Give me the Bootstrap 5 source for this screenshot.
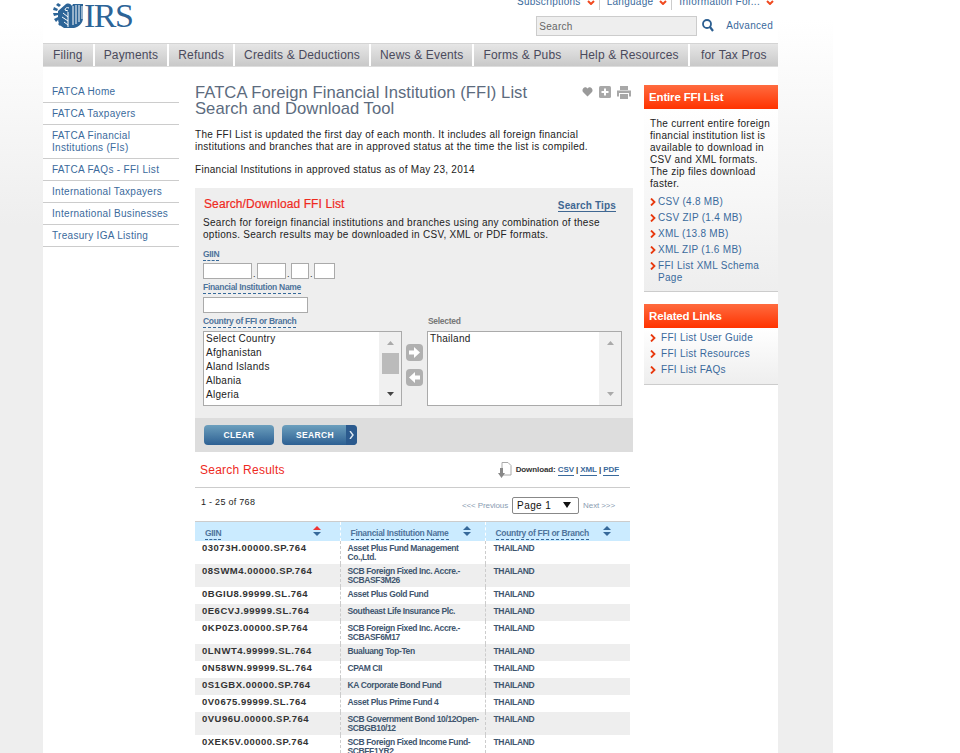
<!DOCTYPE html>
<html lang="en"><head><meta charset="utf-8"><title>FATCA FFI List</title>
<link href="https://cdn.jsdelivr.net/npm/bootstrap@5.3.0/dist/css/bootstrap.min.css" rel="stylesheet">
<style>
html,body{height:753px;overflow:hidden;background:#fff}
body{font-family:"Liberation Sans",Arial,sans-serif;font-size:10px;line-height:12px;letter-spacing:.28px;color:#222}
a{color:#3a6a9c;text-decoration:none}
.pagebg{width:833px;height:753px;padding-left:43px;background:linear-gradient(#fff 0,#fff 20px,#eee 225px)}
.sheet{width:735px;height:753px;background:#fff;overflow:hidden}
.tophead{height:43px}
.logoarea{padding:3px 0 0 10px;gap:1px;height:30px}
.irsword{font-family:"Liberation Serif",serif;font-size:34px;line-height:26px;letter-spacing:-1.5px;color:#2c6497}
.headright{width:260px;padding-right:4px}
.toplinks{height:10px;justify-content:flex-end}
.toplinks span{height:10px;line-height:1px;padding:0 4px 0 7px;border-right:1px solid #ccc;color:#3a6a9c;white-space:nowrap}
.toplinks span:last-child{border:0;padding-right:0}
.hdrop{display:inline-block;width:8px;height:5px;margin-left:6px;vertical-align:0}
.searchrow{margin-top:6px;align-items:flex-start;justify-content:flex-end}
.sitesearch{width:161px;height:20px;background:#eee;border:1px solid #ccc;color:#666;line-height:19px;padding-left:2px}
.mglass{margin:2px 0 0 4px;width:13px;height:15px}
.advlink{margin:4px 1px 0 12px}
.mainnav{height:24px;background:linear-gradient(#e6e6e6,#c9c9c9);border-top:1px solid #d4d4d4;border-bottom:1px solid #ddd}
.mainnav a{color:#4a4a5c;font-size:12px;line-height:23px;letter-spacing:.16px;padding:0 9px;border-right:2px solid #fff;white-space:nowrap;display:block}
.mainnav a:first-child{padding-left:10px;padding-right:10px}
.mainnav a:last-child{border-right:0;flex:1;text-align:center;padding:0}
.mainnav a.noedge{border-right:0}
.pagecols{padding-top:14px}
.leftside{width:136px;margin:0 16px 0 0;flex:none}
.leftside a{display:block;padding:5px 8px 4px 9px;border-bottom:1px solid #ccc;line-height:12px;letter-spacing:.3px}
.mid{width:438px;flex:none;margin-top:4px}
.midtitle{display:flex;justify-content:space-between}
.midtitle h1{font-size:16.6px;line-height:16px;font-weight:400;color:#5c6b7e;margin:0;letter-spacing:.05px;width:345px}
.titleicons{gap:6px;margin:1px 2px 0 0}
.para{margin:12px 0 0;width:410px}
.para2{margin:11px 0 0}
.searchpanel{background:#eee;margin-top:12px;padding:9px 8px 0 8px}
.paneltop{justify-content:space-between}
.paneltitle{font-size:12px;line-height:15px;color:#ee2a1e;letter-spacing:.1px;-webkit-text-stroke:.2px #ee2a1e;margin-left:1px}
.tips{font-weight:700;color:#3f6792;border-bottom:1px solid #3f6792;line-height:11px;height:12px;margin:3px 9px 0 0;letter-spacing:.15px}
.panelintro{margin:5px 0 0;width:410px}
.fieldlabel{display:block;width:fit-content;font-size:8.5px;line-height:9px;font-weight:700;letter-spacing:-.3px;color:#4f749c;border-bottom:1px dashed #36699a;height:11px}
.plainlabel{display:block;font-size:8.5px;line-height:9px;font-weight:700;color:#777;letter-spacing:-.3px}
.giinrow{display:flex;margin:2px 0 0;align-items:flex-end}
.box{display:block;height:16px;background:#fff;border:1px solid #aaa;flex:none}
.w49{width:49px}.w29{width:29px}.w18{width:18px}.w21{width:21px}
.dotsep{width:5px;text-align:center;line-height:9px;font-size:9px}
.namelabel{margin-top:4px}
.nameinput{width:105px;margin:3px 0 0}
.labelsrow{margin-top:4px}
.labelcell{width:225px}
.listrow{display:flex;margin:3px 0 0}
.listbox{height:75px;background:#fff;border:1px solid #aaa;display:flex;line-height:14px}
.lefter{width:199px}.righter{width:195px}
.listitems{flex:1;padding:0 2px;min-width:0}
.fakescroll{width:22px;background:#f0f0f0;display:flex;flex-direction:column;align-items:center;padding:9px 0}
.fakescroll .lastarrow{margin-top:auto}
.thumb{width:17px;height:21px;background:#bbb;margin-top:8px}
.arrowcol{width:25px;display:flex;flex-direction:column;align-items:center;gap:8px;padding-top:13px}
.buttonbar{background:#ddd;height:34px;margin:12px -8px 0;padding:7px 0 0 9px;gap:8px}
.panelform{margin-top:9px}
.actbtn{height:20px;border-radius:4px;background:linear-gradient(#6c9fbd,#2d6093);color:#fff;font-size:8.5px;font-weight:700;line-height:20px;text-align:center;letter-spacing:.35px;width:70px;padding:0;border:0}
.searchbtn{width:75px;display:flex;overflow:hidden}
.searchbtn b{flex:1;padding-left:2px}
.searchbtn i{width:11px;background:#2b5a8e;font-style:normal;display:flex;align-items:center;justify-content:center}
.resultshead{height:36px;border-bottom:1px solid #ccc;margin-right:3px;justify-content:space-between}
.resulttitle{font-size:12px;line-height:14px;color:#ee2a1e;margin:11px 0 0 5px;letter-spacing:.25px}
.dlbar{font-size:8px;font-weight:700;color:#333;margin:13px 11px 0 0;letter-spacing:-.1px;line-height:10px;align-items:flex-start}
.dlicon{margin-top:-3px}
.dlbar a{border-bottom:1px solid #3a6a9c;display:inline-block;height:11px;color:#3a6a9c}
.pagerow{justify-content:space-between;height:33px;margin-right:3px;padding-left:6px}
.pagerow .countxt{margin-top:8px;font-size:9px}
.pager{margin:9px 15px 0 0;font-size:8px;letter-spacing:-.1px;color:#8a9cb2;align-items:center;gap:4px;height:17px}
.pagesel{width:67px;height:17px;border:1px solid #888;border-radius:2px;background:#fff;color:#111;font-size:10px;line-height:15px;padding-left:4px;display:flex;justify-content:space-between;letter-spacing:.4px}
.pagesel u{text-decoration:none;width:0;height:0;border:4px solid transparent;border-top:6px solid #111;border-bottom:0;margin:4px 7px 0 0}
.restable{width:435px;table-layout:fixed;border-collapse:collapse;border-top:1px solid #ccc}
.restable col{width:145px}
.restable th{height:19px;background:#cbebff;padding:0 0 0 10px;vertical-align:top;border-right:1px dashed #fff}
.restable th:last-child{border-right:0}
.restable th>div{display:flex;padding-top:4px}
.restable th .fieldlabel{margin-top:3px}
.sorter{display:block;width:8px;height:10px;flex:none;margin-left:14px}
.sorter.far{margin-left:92px}
.restable td{padding:3px 0 2px 8px;vertical-align:top;font-size:8.5px;line-height:9px;font-weight:700;color:#3f566f;letter-spacing:-.32px;border-right:1px dashed #ccc;white-space:nowrap}
.restable td:first-child{font-size:9.5px;letter-spacing:.5px;color:#333;padding:2px 0 3px 7px}
.restable td:nth-child(2){padding-left:7px;letter-spacing:-.38px}
.restable td:last-child{border-right:0}
.restable tr:nth-child(even) td{background:#eee}
.restable tbody tr{height:17px}
.rightside{width:135px;margin-left:11px;flex:none;margin-top:4px}
.redhead{height:24px;background:linear-gradient(#ff6b3f,#ff3300);color:#fff;font-size:11.5px;font-weight:700;line-height:24px;padding-left:5px;letter-spacing:-.15px;margin-right:-1px}
.sidebox{background:linear-gradient(#fff,#eee);border-bottom:1px solid #ccc;padding:9px 5px 3px 6px}
.sidebox p{margin:0 0 6px;letter-spacing:.3px}
.sidelinks{list-style:none;padding:0;margin:0}
.sidelinks li{display:flex;padding-bottom:4px;gap:2px;line-height:12px}
.chev{width:6px;height:8px;flex:none;margin-top:2px}
.relbox{padding:4px 5px 4px 6px}
.relbox .sidelinks li{gap:5px}
.gapbox{height:12px}
</style></head><body>
<div class="pagebg"><div class="sheet">
<header class="tophead d-flex justify-content-between">
<div class="logoarea d-flex">
<svg width="30" height="25" viewBox="0 0 30 25"><g fill="#2c6497"><path d="M13 1c3-1 5 0 6 2l1-2h10v14c0 5-4 9-9 10H11c-4-2-6-5-6-9V8z"/><path d="M5 0l3 2-2 2-3-2zM1 4l4 2-1 2-4-1zM0 10h5v2l-4 1zM1 16l4-2 1 2-3 3zM5 21l3-3 2 2-3 3z"/></g><g stroke="#fff" fill="none"><path d="M16 5c-2-1-4 0-4 2l3 1M10 10l5 4M9 14l6 4M11 19l4 3M15 9v15M20 3v19M23 2v19M26 2v17M29 3v13"/></g></svg>
<span class="irsword">IRS</span>
</div>
<div class="headright">
<div class="toplinks d-flex">
<span>Subscriptions<svg class="hdrop" viewBox="0 0 8 5"><path d="M1 1l3 3 3-3" fill="none" stroke="#f04a20" stroke-width="2"/></svg></span>
<span>Language<svg class="hdrop" viewBox="0 0 8 5"><path d="M1 1l3 3 3-3" fill="none" stroke="#f04a20" stroke-width="2"/></svg></span>
<span>Information For...<svg class="hdrop" viewBox="0 0 8 5"><path d="M1 1l3 3 3-3" fill="none" stroke="#f04a20" stroke-width="2"/></svg></span>
</div>
<div class="searchrow d-flex">
<div class="sitesearch">Search</div>
<svg class="mglass" viewBox="0 0 13 15"><circle cx="6" cy="6" r="4" fill="none" stroke="#2c5f91" stroke-width="1.8"/><path d="M9 9l3 4" stroke="#2c5f91" stroke-width="2.2"/></svg>
<a class="advlink" href="#">Advanced</a>
</div>
</div>
</header>
<nav class="mainnav d-flex">
<a href="#">Filing</a><a href="#">Payments</a><a href="#">Refunds</a><a href="#">Credits &amp; Deductions</a><a href="#">News &amp; Events</a><a href="#" class="noedge">Forms &amp; Pubs</a><a href="#">Help &amp; Resources</a><a href="#">for Tax Pros</a>
</nav>
<div class="pagecols d-flex">
<aside class="leftside">
<a href="#">FATCA Home</a><a href="#">FATCA Taxpayers</a><a href="#">FATCA Financial Institutions (FIs)</a><a href="#">FATCA FAQs - FFI List</a><a href="#">International Taxpayers</a><a href="#">International Businesses</a><a href="#">Treasury IGA Listing</a>
</aside>
<main class="mid">
<div class="midtitle">
<h1>FATCA Foreign Financial Institution (FFI) List Search and Download Tool</h1>
<div class="titleicons d-flex">
<svg width="11" height="11" viewBox="0 0 11 11"><path d="M5.500 10.500L1 6C-1 3 3 -1 5.500 2.500 8 -1 12 3 10 6z" fill="#9a9a9a"/></svg>
<svg width="12" height="12" viewBox="0 0 12 12"><rect width="12" height="12" rx="1.500" fill="#a8a8a8"/><path d="M6 2.500v7M2.500 6h7" stroke="#fff" stroke-width="2"/></svg>
<svg width="14" height="13" viewBox="0 0 14 13"><path d="M3 0h8v4H3zM0 4.500h14v6h-2V7H2v3.500H0zM3 8h8v5H3z" fill="#a8a8a8"/></svg>
</div></div>
<p class="para">The FFI List is updated the first day of each month. It includes all foreign financial institutions and branches that are in approved status at the time the list is compiled.</p>
<p class="para2">Financial Institutions in approved status as of May 23, 2014</p>
<section class="searchpanel">
<div class="paneltop d-flex"><div class="paneltitle">Search/Download FFI List</div><a class="tips" href="#">Search Tips</a></div>
<p class="panelintro">Search for foreign financial institutions and branches using any combination of these options. Search results may be downloaded in CSV, XML or PDF formats.</p>
<form class="panelform">
<span class="fieldlabel">GIIN</span>
<div class="giinrow"><input class="box w49"><span class="dotsep">.</span><input class="box w29"><span class="dotsep">.</span><input class="box w18"><span class="dotsep">.</span><input class="box w21"></div>
<span class="fieldlabel namelabel">Financial Institution Name</span>
<input class="box nameinput">
<div class="d-flex labelsrow"><div class="labelcell"><span class="fieldlabel">Country of FFI or Branch</span></div><span class="plainlabel">Selected</span></div>
<div class="listrow">
<div class="listbox lefter"><div class="listitems">Select Country<br>Afghanistan<br>Aland Islands<br>Albania<br>Algeria</div>
<div class="fakescroll"><svg width="7" height="4"><path d="M0 4l3.500-4L7 4z" fill="#aaa"/></svg><div class="thumb"></div><svg class="lastarrow" width="7" height="4"><path d="M0 0l3.500 4L7 0z" fill="#444"/></svg></div></div>
<div class="arrowcol">
<svg width="17" height="17" viewBox="0 0 17 17"><rect width="17" height="17" rx="4" fill="#b0b0b0"/><path d="M3 6.500h5V3l6 5.500-6 5.500v-3.500H3z" fill="#fff"/></svg>
<svg width="17" height="17" viewBox="0 0 17 17"><rect width="17" height="17" rx="4" fill="#b0b0b0"/><path d="M14 6.500H9V3L3 8.500 9 14v-3.500h5z" fill="#fff"/></svg>
</div>
<div class="listbox righter"><div class="listitems">Thailand</div>
<div class="fakescroll"><svg width="7" height="4"><path d="M0 4l3.500-4L7 4z" fill="#aaa"/></svg><svg class="lastarrow" width="7" height="4"><path d="M0 0l3.500 4L7 0z" fill="#aaa"/></svg></div></div>
</div>
<div class="buttonbar d-flex">
<button type="button" class="actbtn">CLEAR</button>
<button type="button" class="actbtn searchbtn"><b>SEARCH</b><i><svg width="5" height="8" viewBox="0 0 5 8"><path d="M1 0l3 4-3 4" fill="none" stroke="#dfe9f2" stroke-width="1.400"/></svg></i></button>
</div>
</form>
</section>
<div class="resultshead d-flex">
<div class="resulttitle">Search Results</div>
<div class="dlbar d-flex gap-1">
<svg class="dlicon" width="15" height="16" viewBox="0 0 15 16"><path d="M5 .5h6l3 3V13H5z" fill="#fff" stroke="#aaa"/><path d="M3 6h3v5h2l-3.500 5L1 11h2z" fill="#888"/></svg>
<span>Download: <a href="#">CSV</a> | <a href="#">XML</a> | <a href="#">PDF</a></span>
</div></div>
<div class="pagerow d-flex">
<div class="countxt">1 - 25 of 768</div>
<div class="pager d-flex"><span>&lt;&lt;&lt; Previous</span><div class="pagesel">Page 1<u></u></div><span>Next &gt;&gt;&gt;</span></div>
</div>
<table class="restable">
<colgroup><col><col><col></colgroup>
<thead><tr>
<th><div><span class="fieldlabel">GIIN</span><svg class="sorter far" viewBox="0 0 8 10"><path d="M0 4l4-4 4 4z" fill="#e33"/><path d="M0 6l4 4 4-4z" fill="#36699a"/></svg></div></th>
<th><div><span class="fieldlabel">Financial Institution Name</span><svg class="sorter" viewBox="0 0 8 10"><path d="M0 4l4-4 4 4z" fill="#36699a"/><path d="M0 6l4 4 4-4z" fill="#36699a"/></svg></div></th>
<th><div><span class="fieldlabel">Country of FFI or Branch</span><svg class="sorter" viewBox="0 0 8 10"><path d="M0 4l4-4 4 4z" fill="#36699a"/><path d="M0 6l4 4 4-4z" fill="#36699a"/></svg></div></th>
</tr></thead>
<tbody>
<tr><td>03073H.00000.SP.764</td><td>Asset Plus Fund Management<br>Co.,Ltd.</td><td>THAILAND</td></tr>
<tr><td>08SWM4.00000.SP.764</td><td>SCB Foreign Fixed Inc. Accre.-<br>SCBASF3M26</td><td>THAILAND</td></tr>
<tr><td>0BGIU8.99999.SL.764</td><td>Asset Plus Gold Fund</td><td>THAILAND</td></tr>
<tr><td>0E6CVJ.99999.SL.764</td><td>Southeast Life Insurance Plc.</td><td>THAILAND</td></tr>
<tr><td>0KP0Z3.00000.SP.764</td><td>SCB Foreign Fixed Inc. Accre.-<br>SCBASF6M17</td><td>THAILAND</td></tr>
<tr><td>0LNWT4.99999.SL.764</td><td>Bualuang Top-Ten</td><td>THAILAND</td></tr>
<tr><td>0N58WN.99999.SL.764</td><td>CPAM CII</td><td>THAILAND</td></tr>
<tr><td>0S1GBX.00000.SP.764</td><td>KA Corporate Bond Fund</td><td>THAILAND</td></tr>
<tr><td>0V0675.99999.SL.764</td><td>Asset Plus Prime Fund 4</td><td>THAILAND</td></tr>
<tr><td>0VU96U.00000.SP.764</td><td>SCB Government Bond 10/12Open-<br>SCBGB10/12</td><td>THAILAND</td></tr>
<tr><td>0XEK5V.00000.SP.764</td><td>SCB Foreign Fixed Income Fund-<br>SCBFF1YR2</td><td>THAILAND</td></tr>
</tbody></table>
</main>
<aside class="rightside">
<div class="redhead">Entire FFI List</div>
<div class="sidebox"><p>The current entire foreign financial institution list is available to download in CSV and XML formats. The zip files download faster.</p>
<ul class="sidelinks">
<li><svg class="chev" viewBox="0 0 6 8"><path d="M1 .5L4.500 4 1 7.500" fill="none" stroke="#e8380d" stroke-width="1.800"/></svg><a href="#">CSV (4.8 MB)</a></li>
<li><svg class="chev" viewBox="0 0 6 8"><path d="M1 .5L4.500 4 1 7.500" fill="none" stroke="#e8380d" stroke-width="1.800"/></svg><a href="#">CSV ZIP (1.4 MB)</a></li>
<li><svg class="chev" viewBox="0 0 6 8"><path d="M1 .5L4.500 4 1 7.500" fill="none" stroke="#e8380d" stroke-width="1.800"/></svg><a href="#">XML (13.8 MB)</a></li>
<li><svg class="chev" viewBox="0 0 6 8"><path d="M1 .5L4.500 4 1 7.500" fill="none" stroke="#e8380d" stroke-width="1.800"/></svg><a href="#">XML ZIP (1.6 MB)</a></li>
<li><svg class="chev" viewBox="0 0 6 8"><path d="M1 .5L4.500 4 1 7.500" fill="none" stroke="#e8380d" stroke-width="1.800"/></svg><a href="#">FFI List XML Schema Page</a></li>
</ul></div>
<div class="gapbox"></div>
<div class="redhead">Related Links</div>
<div class="relbox sidebox">
<ul class="sidelinks">
<li><svg class="chev" viewBox="0 0 6 8"><path d="M1 .5L4.500 4 1 7.500" fill="none" stroke="#e8380d" stroke-width="1.800"/></svg><a href="#">FFI List User Guide</a></li>
<li><svg class="chev" viewBox="0 0 6 8"><path d="M1 .5L4.500 4 1 7.500" fill="none" stroke="#e8380d" stroke-width="1.800"/></svg><a href="#">FFI List Resources</a></li>
<li><svg class="chev" viewBox="0 0 6 8"><path d="M1 .5L4.500 4 1 7.500" fill="none" stroke="#e8380d" stroke-width="1.800"/></svg><a href="#">FFI List FAQs</a></li>
</ul></div>
</aside>
</div>
</div></div>
<script src="https://cdn.jsdelivr.net/npm/bootstrap@5.3.0/dist/js/bootstrap.bundle.min.js"></script>
</body></html>
